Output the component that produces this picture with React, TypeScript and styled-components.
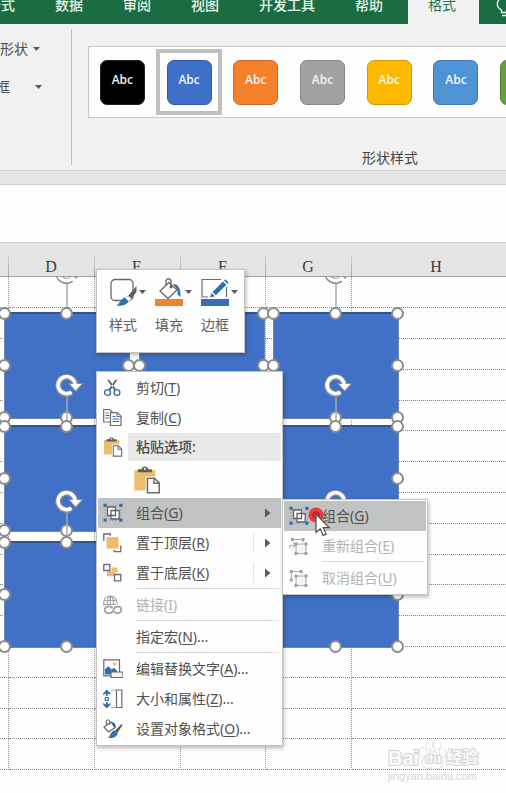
import React from "react";
import styled, { createGlobalStyle, css } from "styled-components";

const GlobalStyle = createGlobalStyle`
  *, *::before, *::after { box-sizing: border-box; }
  body {
    margin: 0;
    background: #fdfefd;
    color: #4c4c4c;
    font-family: "Noto Sans", "Noto Sans CJK SC", sans-serif;
    font-size: 14px;
    line-height: 20px;
  }
  button {
    margin: 0;
    padding: 0;
    border: 0;
    background: none;
    color: inherit;
    font: inherit;
    text-align: left;
  }
`;

const Page = styled.div`
  display: flex;
  flex-direction: column;
  min-height: 100vh;
  overflow: hidden;
`;

/* ---------- ribbon ---------- */

const TabBar = styled.nav`
  display: flex;
  height: 24px;
  background: #1a6c43;
  overflow: hidden;
`;

const TabStrip = styled.div`
  display: flex;
  flex: none;
  height: 24px;
  margin-left: -33px;
`;

const Tab = styled.button<{ $active?: boolean }>`
  flex: none;
  height: 24px;
  padding: 0 20px 14px;
  color: #e9f5ec;
  font-weight: 500;
  line-height: 10px;
  white-space: nowrap;
  ${(p) =>
    p.$active &&
    css`
      margin: 0 16px 0 5px;
      padding: 0 23px 14px 20px;
      background: #f1f1f1;
      color: #2a7350;
      font-weight: 400;
    `}
`;

const BulbButton = styled.button`
  display: flex;
  flex: none;
  width: 18px;
  height: 24px;
`;

const Ribbon = styled.section`
  display: flex;
  height: 147px;
  background: #f1f1f1;
  border-bottom: 1px solid #d2d3d2;
`;

const InsertGroup = styled.div`
  display: flex;
  flex-direction: column;
  flex: none;
  gap: 18px;
  width: 72px;
  height: 136px;
  margin-top: 5px;
  padding-top: 10px;
  border-right: 1px solid #bdbebd;
  overflow: hidden;
`;

const ShapeTool = styled.button<{ $clipped?: boolean }>`
  display: flex;
  align-items: center;
  justify-content: space-between;
  width: ${(p) => (p.$clipped ? 46 : 40)}px;
  margin-left: ${(p) => (p.$clipped ? -4 : 0)}px;
`;

const StyleGroup = styled.div`
  display: flex;
  flex: 1;
  flex-direction: column;
  justify-content: space-between;
  min-width: 0;
  padding: 22px 0 2px 16px;
`;

const Gallery = styled.div`
  display: flex;
  height: 72px;
  border: 1px solid #c6c7c6;
  border-right: 0;
  background: #fefefe;
  overflow: hidden;
`;

const GalleryCell = styled.button<{ $selected?: boolean }>`
  display: flex;
  flex: 0 0 16%;
  align-items: center;
  justify-content: center;
  height: 66px;
  margin-top: 2px;
  border: ${(p) => (p.$selected ? "4px solid #bfc1bf" : "0")};
`;

const Swatch = styled.span<{ $fill: string; $edge: string }>`
  flex: none;
  width: 45px;
  height: 45px;
  border: 1px solid ${(p) => p.$edge};
  border-radius: 7px;
  background: ${(p) => p.$fill};
  color: #f1f4f6;
  font-family: "Open Sans", sans-serif;
  font-size: 12px;
  font-weight: 600;
  line-height: 38px;
  text-align: center;
`;

const GroupLabel = styled.div`
  width: 100%;
  max-width: 357px;
  padding-right: 27px;
  color: #444;
  text-align: right;
`;

const RibbonEdge = styled.div`
  height: 14px;
  background: #e4e5e4;
  border-bottom: 1px solid #cdcecd;
`;

const FormulaBar = styled.div`
  height: 57px;
  background: #fcfefc;
`;

/* ---------- sheet ---------- */

const Workspace = styled.main`
  position: relative;
  flex: 1;
`;

const Grid = styled.table`
  width: 522px;
  border-spacing: 0;
  table-layout: fixed;
`;

const ColumnHead = styled.th`
  height: 35px;
  padding: 15px 2px 0 0;
  border-top: 1px solid #cfd0cf;
  border-bottom: 1px solid #9c9d9c;
  background: linear-gradient(to top, #a9aaa9, #cccdcc) right bottom / 1px 21px no-repeat #e3e4e3;
  color: #3c3c3c;
  font-family: "Liberation Serif", serif;
  font-size: 16px;
  font-weight: 400;
  line-height: 18px;
`;

const GridRow = styled.tr`
  height: 31px;
  &:nth-child(5n) { height: 30px; }
`;

const Cell = styled.td`
  padding: 0;
  border-right: 1px dotted #979797;
  border-bottom: 1px dotted #858585;
`;

const Canvas = styled.div`
  position: absolute;
  inset: 35px 0 0;
  overflow: hidden;
`;

const ShapeBox = styled.div<{ $x: number; $y: number }>`
  position: absolute;
  left: ${(p) => p.$x}px;
  top: ${(p) => p.$y}px;
  width: 126px;
  height: 107px;
  border: 1px solid #6f87ad;
  border-top: 2px solid #34538a;
  background: #4071c6;
`;

const Handle = styled.i<{ $x: number; $y: number }>`
  position: absolute;
  left: ${(p) => p.$x}%;
  top: ${(p) => p.$y}%;
  width: 13px;
  height: 13px;
  margin: -7px 0 0 -7px;
  border: 2px solid #8b8b8b;
  border-radius: 50%;
  background: #fff;
`;

const Rotator = styled.svg`
  position: absolute;
  left: 50%;
  top: -56px;
  width: 32px;
  height: 56px;
  margin-left: -14px;
`;

/* ---------- floating panels ---------- */

const floating = css`
  position: absolute;
  border: 1px solid #c3c4c3;
  background: #fdfefd;
  box-shadow: 1px 2px 4px rgba(0, 0, 0, 0.28);
`;

const MiniToolbar = styled.div`
  ${floating}
  left: 96px;
  top: 27px;
  display: flex;
  width: 149px;
  height: 84px;
  padding: 8px 0 0 12px;
`;

const MiniButton = styled.button`
  display: flex;
  flex: none;
  flex-direction: column;
  gap: 9px;
  width: 46px;
  height: 60px;
  color: #606060;
`;

const MiniIcons = styled.span`
  display: flex;
  align-items: center;
  gap: 2px;
`;

const Menu = styled.div`
  ${floating}
  left: 96px;
  top: 129px;
  width: 187px;
  padding: 1px;
`;

const SubMenu = styled.div`
  ${floating}
  left: 282px;
  top: 257px;
  width: 146px;
  padding: 1px;
`;

const MenuItem = styled.button<{ $active?: boolean }>`
  display: grid;
  grid-template-columns: 30px 1fr 20px;
  column-gap: 8px;
  align-items: center;
  width: 100%;
  height: 30px;
  color: #505050;
  white-space: nowrap;
  background: ${(p) => (p.$active ? "#c1c3c2" : "none")};
  &:disabled { color: #b3b3b3; }
  & > svg:first-child { justify-self: center; }
  u { text-underline-offset: 2px; }
`;

const ItemText = styled.span`
  grid-column: 2;
`;

const ArrowSlot = styled.span<{ $split?: boolean }>`
  display: flex;
  align-items: center;
  justify-content: center;
  width: 28px;
  height: 20px;
  margin-left: -8px;
  border-left: 1px solid ${(p) => (p.$split ? "#e2e3e2" : "transparent")};
`;

const PasteHeading = styled.div`
  display: grid;
  grid-template-columns: 30px 1fr;
  align-items: center;
  height: 28px;
  font-weight: 500;
  & > svg { justify-self: center; }
`;

const PasteTitle = styled.span`
  height: 28px;
  padding-left: 8px;
  background: #e9e9e9;
  line-height: 28px;
`;

const PasteOption = styled.button`
  display: flex;
  align-items: center;
  height: 37px;
  padding-left: 35px;
`;

const Divider = styled.hr`
  height: 1px;
  margin: 0 2px 1px 38px;
  border: 0;
  background: #dcdddc;
`;

const Pointer = styled.svg`
  position: absolute;
  left: 306px;
  top: 263px;
  width: 28px;
  height: 34px;
  pointer-events: none;
`;

const Watermark = styled.div`
  position: absolute;
  left: 388px;
  top: 496px;
  color: #fbfbfb;
  -webkit-text-stroke: 2px #d4d4d4;
  paint-order: stroke fill;
  font-family: "Liberation Sans", "Noto Sans CJK SC", sans-serif;
`;

const BrandLine = styled.div`
  display: flex;
  align-items: flex-end;
  height: 32px;
  font-size: 20px;
  font-weight: 700;
  line-height: 24px;
`;

const Paw = styled.span`
  position: relative;
  width: 27px;
  height: 32px;
`;

const PawText = styled.span`
  position: absolute;
  left: 6px;
  top: 11px;
  font-size: 13px;
  line-height: 20px;
`;

const BrandCjk = styled.span`
  font-size: 16px;
`;

const SiteLine = styled.div`
  color: #d6d6d6;
  font-size: 11px;
  line-height: 12px;
  -webkit-text-stroke: 0;
`;

/* ---------- icons ---------- */

const G = "#6b6b6b";
const B = "#2f6fb0";
const Y = "#edbd6c";

const Svg = ({ size = 20, children }: { size?: number; children: React.ReactNode }) => (
  <svg width={size} height={size} viewBox={`0 0 ${size} ${size}`} fill="none" aria-hidden="true">
    {children}
  </svg>
);

const Caret = () => (
  <svg width="7" height="4" viewBox="0 0 7 4" aria-hidden="true">
    <path d="M0 0h7L3.500 4z" fill="#5a5a5a" />
  </svg>
);

const RightArrow = () => (
  <svg width="6" height="10" viewBox="0 0 6 10" aria-hidden="true">
    <path d="M0 0.500v9L5.500 5z" fill="#5a5a5a" />
  </svg>
);

const Bulb = () => (
  <svg width="18" height="24" viewBox="0 0 18 24" fill="none" stroke="#e4f1e8" strokeWidth="1.400" aria-hidden="true">
    <path d="M6.500 12.500v-2.500C-.5 6 2-2 9-2s9.500 8 2.500 12v2.500zM7 15.500h4" />
  </svg>
);

const CutIcon = () => (
  <Svg>
    <path d="M4 1.500l2.200.4 6.800 9.600-1.600.9zM14.500 1.500l-2.200.4-6.800 9.600 1.600.9z" fill="#555" />
    <circle cx="4.500" cy="14.500" r="2.900" stroke={B} strokeWidth="1.400" />
    <circle cx="14" cy="14.500" r="2.900" stroke={B} strokeWidth="1.400" />
  </Svg>
);

const CopyIcon = () => (
  <Svg>
    <path d="M.7 1.500h6l2.800 2.800V14H.7z" fill="#fff" stroke={G} strokeWidth="1.200" />
    <path d="M2.500 5h3M2.500 7.500h4M2.500 10h4" stroke={B} />
    <path d="M7.500 4.700h7l3.500 3.500v9.300H7.500z" fill="#fff" stroke={G} strokeWidth="1.200" />
    <path d="M14 5v3.500h4" stroke={G} />
    <path d="M9.500 8.500h3M9.500 11h6.500M9.500 13.500h6.500" stroke={B} />
  </Svg>
);

const PasteIcon = ({ size = 20 }: { size?: number }) => (
  <svg width={size} height={size} viewBox="0 0 20 20" fill="none" aria-hidden="true">
    <path d="M1 3h15v14.500H1z" fill={Y} />
    <path d="M3.500 4.500V2.300h2.700Q6.500.3 8.500.3t2.300 2h2.700v2.200z" fill="#5c5c5c" />
    <circle cx="8.500" cy="2" r=".8" fill="#fff" />
    <path d="M9 7.500h7.500l3 3V20H9z" fill="#fff" />
    <path d="M10.300 8.700h5l3.400 3.400v7h-8.400z" fill="#fff" stroke={G} strokeWidth="1.100" />
    <path d="M15 8.800v3.500h3.700" stroke={G} strokeWidth="1" />
  </svg>
);

const GroupIcon = () => (
  <Svg>
    <path d="M4 3.500h9.500v3H17v9H7.500v-3H4z" fill="#fff" />
    <path d="M4.500 4h8v8.500h-8zM8 7.500h8.200V16H8z" stroke="#606060" strokeWidth="1.300" />
    <path d="M.5.800h3.200V4H.500zM16.300.800h3.200V4h-3.200zM.5 15.500h3.200v3.200H.500zM16.300 15.500h3.200v3.200h-3.200z" fill={B} />
    <path d="M6 2.300h8M6 17.300h8M2 6v8M18 6v8" stroke="#8a9aa8" strokeDasharray="1.500 1.500" />
  </Svg>
);

const FrontIcon = () => (
  <Svg>
    <path d="M3.500 4h12v11.500h-12z" fill={Y} />
    <path d="M.8 8V1h6.500v1.800M17.800 12.500v6.200h-6.500V17" stroke={G} strokeWidth="1.300" />
  </Svg>
);

const BackIcon = () => (
  <Svg>
    <path d="M8.500 4.500h6v5h-2.700v3.800H4V8.200h4.500z" fill={Y} />
    <path d="M.8 1.500h6v6h-6zM11.500 11.500h6.300v6.300h-6.300z" fill="#fff" stroke={G} strokeWidth="1.300" />
  </Svg>
);

const LinkIcon = () => (
  <Svg>
    <g stroke="#a2a2a2" strokeWidth="1.200">
      <path d="M1 10.500C-.3 4.500 3 1 7.300 1s7.200 3.500 6.700 8M1 5.500h12.500M1 9.500h12M5 10C3.500 6 5 2.500 7.300 1c2.500 1.500 3.700 4.500 3 8M7.300 1v8.500" />
      <path d="M9.500 13.200c-.5-1-1.500-1.700-2.900-1.700H5a3.300 3.300 0 000 6.600h1.600c1.600 0 2.500-.8 3.400-2.200l1-2.200c.6-1.200 1.500-2.200 3-2.200h1a3.300 3.300 0 010 6.600h-1c-1.400 0-2.300-.7-2.800-1.600" strokeWidth="1.900" />
    </g>
  </Svg>
);

const AltTextIcon = () => (
  <Svg>
    <path d="M.8.800h15.700v16H.8z" fill="#fff" stroke={G} strokeWidth="1.200" />
    <circle cx="11.500" cy="5" r="1.700" fill={Y} />
    <path d="M2 15.500V10l3.500-2.800 3 3.300 2.500-1.800 3 3v3.800z" fill={B} />
    <path d="M8 13h12v5.500H8z" fill="#f3f3f3" stroke={G} strokeWidth="1.200" />
  </Svg>
);

const SizeIcon = () => (
  <Svg>
    <path d="M3.800.5L7.500 4.500V6L4.700 4.500V7H2.900V4.500L0 6V4.500zM3.800 19.500L7.500 15.500V14l-2.800 1.500V13H2.900v2.500L0 14v1.500z" fill={B} />
    <path d="M2.300 8.500h3v3h-3z" stroke={B} strokeWidth="1.200" />
    <path d="M8 1.200h5M8 18.500h5" stroke="#8db4dc" />
    <path d="M13.500 1h5.300v17.500h-5.300z" fill="#fff" stroke={G} strokeWidth="1.200" />
  </Svg>
);

const FormatIcon = () => (
  <Svg>
    <path d="M1 8l7-5 4 5.500L5.500 13z" fill="#fff" stroke={G} strokeWidth="1.200" />
    <path d="M3.500 6V2Q5-.5 6.700 2v4" stroke={G} strokeWidth="1.200" />
    <path d="M8 3c3 0 5 1.500 4.800 6l-2-1z" fill={B} />
    <path d="M18.500 5l1 1-5 8-3-2z" fill="#606060" />
    <path d="M11 11.500l3.700 2.700c-1 4-5 5.300-9.700 4.800 2.500-1.500 2-6 6-7.500z" fill={B} />
  </Svg>
);

const RegroupIcon = ({ ungroup }: { ungroup?: boolean }) => (
  <Svg>
    <g stroke="#b0b0b0" strokeWidth="1.100">
      {ungroup ? <path d="M2.500 3.500h9.500M2.500 3.500v8M12 3.500v2" /> : <path d="M3.500 3.500h10.500v3M0 13c0-4 3-4 6-4M4 6.500L6.800 9 4 11.700" />}
      <path d="M7 8h10v9.500H7z" fill="#f4f4f4" />
    </g>
    <path
      d={
        (ungroup ? "M.800 2h3v3h-3zM10.500 2h3v3h-3zM.800 10.500h3v3h-3z" : "M2 2h3v3H2zM12.500 2h3v3h-3z") +
        "M5.500 6.500h3v3h-3zM15.500 6.500h3v3h-3zM5.500 16h3v3h-3zM15.500 16h3v3h-3z"
      }
      fill="#a0a0a0"
    />
  </Svg>
);

const StyleIcon = () => (
  <Svg size={28}>
    <rect x="2" y="1.500" width="22" height="21" rx="4" stroke="#6a6a6a" strokeWidth="1.300" />
    <path d="M27.500 8v6l-5.500 7-3-3z" fill="#5f5f5f" />
    <path d="M19 17.500l3.500 3.500-3 3-3.500-3.500z" fill="#fff" stroke="#8aa" strokeWidth=".8" />
    <path d="M15.500 19.500l4 4c-3 4.500-8 4.500-12 4 3-1.500 4-6 8-8z" fill={B} />
  </Svg>
);

const FillIcon = () => (
  <Svg size={28}>
    <path d="M5 13l9-8.500 8 7.500-9 8.500z" fill="#fff" stroke="#6a6a6a" strokeWidth="1.300" />
    <path d="M11 8V2.500q2.500-3.500 5 0V9" stroke="#6a6a6a" strokeWidth="1.300" />
    <circle cx="16" cy="9" r="1.400" fill="#555" />
    <path d="M18 6q8 0 7.500 13l-3-2.500V12z" fill={B} />
    <path d="M0 21h28v7H0z" fill="#ee832a" />
  </Svg>
);

const OutlineIcon = () => (
  <Svg size={28}>
    <path d="M20 1.500H1v17.500h6M25.500 9v10" stroke="#6a6a6a" strokeWidth="1.200" />
    <path d="M9 19.500l1.500-5L23 2l3.500 3.300-12.500 12.500z" fill="#fff" />
    <path d="M9 19.500l1.500-4.500 3.300 3.200zM11.500 14L22 3.500l3.300 3.200-10.500 10.500zM23 2.500l1.500-1.300 3.200 3.200-1.400 1.400z" fill={B} />
    <path d="M0 21h28v7H0z" fill="#3a6cbd" />
  </Svg>
);

/* ---------- content ---------- */

const TABS = ["公式", "数据", "审阅", "视图", "开发工具", "帮助"];

const SWATCHES = [
  { name: "black", fill: "#000000", edge: "#222222" },
  { name: "blue", fill: "#3f70c8", edge: "#2f5ba6" },
  { name: "orange", fill: "#f5802b", edge: "#c96a25" },
  { name: "grey", fill: "#a2a2a2", edge: "#858585" },
  { name: "gold", fill: "#fdb900", edge: "#cf9b12" },
  { name: "sky", fill: "#4e94d4", edge: "#3d79b0" },
  { name: "green", fill: "#66a03c", edge: "#548432" },
];

const COLUMNS = [
  { name: "", width: 9 },
  { name: "D", width: 86 },
  { name: "E", width: 86 },
  { name: "F", width: 85 },
  { name: "G", width: 86 },
  { name: "H", width: 170 },
];

const SHAPE_X = [4, 139, 273];
const SHAPE_Y = [35, 148, 264];
const HANDLES = [
  [0, 0], [50, 0], [100, 0],
  [0, 50], [100, 50],
  [0, 100], [50, 100], [100, 100],
];

const Shape = ({ x, y }: { x: number; y: number }) => (
  <ShapeBox $x={x} $y={y}>
    <Rotator viewBox="0 0 32 56" fill="none" aria-hidden="true">
      <path d="M14 25v31" stroke="#a3a8b2" strokeWidth="1.500" />
      <path d="M18.500 21.500A8.500 8.500 0 1 1 22 13" stroke="#858a94" strokeWidth="6" />
      <path d="M14.500 12h16.500L23 21z" fill="#858a94" />
      <path d="M18.500 21A8.500 8.500 0 1 1 22 13" stroke="#fff" strokeWidth="3.600" />
      <path d="M17 13h11.500L22.500 19.500z" fill="#fff" />
    </Rotator>
    {HANDLES.map(([hx, hy]) => (
      <Handle key={`${hx}-${hy}`} $x={hx} $y={hy} />
    ))}
  </ShapeBox>
);

type ItemProps = {
  icon?: React.ReactNode;
  label: string;
  accessKey: string;
  more?: boolean;
  active?: boolean;
  disabled?: boolean;
  arrow?: "plain" | "split";
};

const Item = ({ icon, label, accessKey, more, active, disabled, arrow }: ItemProps) => (
  <MenuItem role="menuitem" $active={active} disabled={disabled} aria-haspopup={arrow ? "menu" : undefined}>
    {icon}
    <ItemText>
      {label}(<u>{accessKey}</u>){more && "..."}
    </ItemText>
    {arrow && (
      <ArrowSlot $split={arrow === "split"}>
        <RightArrow />
      </ArrowSlot>
    )}
  </MenuItem>
);

export default function App() {
  return (
    <Page>
      <GlobalStyle />
      <TabBar>
        <TabStrip>
          {TABS.map((t) => (
            <Tab key={t}>{t}</Tab>
          ))}
          <Tab $active>格式</Tab>
          <BulbButton aria-label="操作说明搜索">
            <Bulb />
          </BulbButton>
        </TabStrip>
      </TabBar>

      <Ribbon>
        <InsertGroup>
          <ShapeTool>形状<Caret /></ShapeTool>
          <ShapeTool $clipped>框<Caret /></ShapeTool>
        </InsertGroup>
        <StyleGroup>
          <Gallery>
            {SWATCHES.map((s) => (
              <GalleryCell key={s.name} $selected={s.name === "blue"}>
                <Swatch $fill={s.fill} $edge={s.edge}>Abc</Swatch>
              </GalleryCell>
            ))}
          </Gallery>
          <GroupLabel>形状样式</GroupLabel>
        </StyleGroup>
      </Ribbon>
      <RibbonEdge />
      <FormulaBar />

      <Workspace>
        <Grid>
          <colgroup>
            {COLUMNS.map((c) => (
              <col key={c.name} width={c.width} />
            ))}
          </colgroup>
          <thead>
            <tr>
              {COLUMNS.map((c) => (
                <ColumnHead key={c.name} scope="col">{c.name}</ColumnHead>
              ))}
            </tr>
          </thead>
          <tbody>
            {Array.from({ length: 16 }, (_, row) => (
              <GridRow key={row}>
                {COLUMNS.map((c) => (
                  <Cell key={c.name} />
                ))}
              </GridRow>
            ))}
          </tbody>
        </Grid>

        <Canvas>
          {SHAPE_Y.map((y) => SHAPE_X.map((x) => <Shape key={`${x}-${y}`} x={x} y={y} />))}
        </Canvas>

        <MiniToolbar role="toolbar">
          <MiniButton>
            <MiniIcons><StyleIcon /><Caret /></MiniIcons>
            样式
          </MiniButton>
          <MiniButton>
            <MiniIcons><FillIcon /><Caret /></MiniIcons>
            填充
          </MiniButton>
          <MiniButton>
            <MiniIcons><OutlineIcon /><Caret /></MiniIcons>
            边框
          </MiniButton>
        </MiniToolbar>

        <Menu role="menu">
          <Item icon={<CutIcon />} label="剪切" accessKey="T" />
          <Item icon={<CopyIcon />} label="复制" accessKey="C" />
          <PasteHeading>
            <PasteIcon />
            <PasteTitle>粘贴选项:</PasteTitle>
          </PasteHeading>
          <PasteOption role="menuitem" aria-label="粘贴">
            <PasteIcon size={28} />
          </PasteOption>
          <Item icon={<GroupIcon />} label="组合" accessKey="G" active arrow="plain" />
          <Item icon={<FrontIcon />} label="置于顶层" accessKey="R" arrow="split" />
          <Item icon={<BackIcon />} label="置于底层" accessKey="K" arrow="split" />
          <Divider />
          <Item icon={<LinkIcon />} label="链接" accessKey="I" disabled />
          <Divider />
          <Item label="指定宏" accessKey="N" more />
          <Divider />
          <Item icon={<AltTextIcon />} label="编辑替换文字" accessKey="A" more />
          <Item icon={<SizeIcon />} label="大小和属性" accessKey="Z" more />
          <Item icon={<FormatIcon />} label="设置对象格式" accessKey="O" more />
        </Menu>

        <SubMenu role="menu">
          <Item icon={<GroupIcon />} label="组合" accessKey="G" active />
          <Item icon={<RegroupIcon />} label="重新组合" accessKey="E" disabled />
          <Divider />
          <Item icon={<RegroupIcon ungroup />} label="取消组合" accessKey="U" disabled />
        </SubMenu>

        <Pointer viewBox="0 0 28 34" aria-hidden="true">
          <circle cx="10" cy="10" r="7.500" fill="#f0282c" opacity=".88" />
          <circle cx="10" cy="10" r="3" fill="none" stroke="#b3161c" strokeWidth="1.200" />
          <path d="M10 9v18.500l4.200-3.700 3 6.700 3-1.400-3-6.400h6z" fill="#fff" stroke="#4b4b4b" strokeWidth="1.200" />
        </Pointer>

        <Watermark>
          <BrandLine>
            Bai
            <Paw>
              <svg width="27" height="32" viewBox="0 0 27 32" fill="#fcfcfc" stroke="#d4d4d4" strokeWidth="1.300" aria-hidden="true">
                <ellipse cx="4" cy="14" rx="3.200" ry="4.500" />
                <ellipse cx="10.500" cy="6.500" rx="3.200" ry="4.700" />
                <ellipse cx="18" cy="7" rx="3.200" ry="4.700" />
                <ellipse cx="23.500" cy="15" rx="3" ry="4.200" />
                <path d="M13.500 13c4 0 4.500 4 7.500 6.500 5 4 2.500 11-3 10.500-3-.5-6-.5-9 0-6 .5-8-6.500-3-10.500C9.500 17 9.500 13 13.500 13z" />
              </svg>
              <PawText>du</PawText>
            </Paw>
            <BrandCjk>经验</BrandCjk>
          </BrandLine>
          <SiteLine>jingyan.baidu.com</SiteLine>
        </Watermark>
      </Workspace>
    </Page>
  );
}
